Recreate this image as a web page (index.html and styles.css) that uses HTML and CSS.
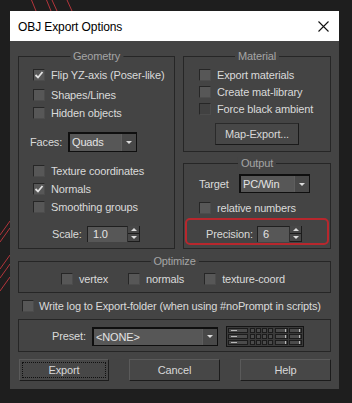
FILE: index.html
```html
<!DOCTYPE html>
<html lang="en">

<head>
    <meta charset="UTF-8">
    <meta name="viewport" content="width=device-width, initial-scale=1.0">
    <title>OBJ Export Options</title>
    <link rel="stylesheet" href="styles.css">
</head>

<body>
    <!-- red strokes of the viewport behind the dialog -->
    <svg class="backdrop" width="352" height="403" viewBox="0 0 352 403">
        <g stroke="#b3353b" stroke-width="1">
            <line x1="31.5" y1="0" x2="36" y2="11" />
            <line x1="46.5" y1="0" x2="51" y2="11" />
            <line x1="52" y1="0" x2="57" y2="11" />
            <line x1="67" y1="0" x2="72" y2="11" />
            <line x1="10" y1="221" x2="0" y2="235" />
            <line x1="10" y1="228" x2="0" y2="242" />
            <line x1="10" y1="255" x2="0" y2="269" />
            <line x1="10" y1="264" x2="0" y2="278" />
            <line x1="10" y1="277" x2="0" y2="291" />
        </g>
    </svg>

    <div class="dialog">
        <div class="titlebar">
            <span class="title">OBJ Export Options</span>
            <svg class="close" width="11" height="11" viewBox="0 0 11 11">
                <path d="M0.5 0.5 L10.5 10.5 M10.5 0.5 L0.5 10.5" stroke="#111" stroke-width="1.1" fill="none" />
            </svg>
        </div>

        <div class="dialog-body">
            <div class="top-row">
                <!-- Geometry -->
                <div class="group geometry">
                    <div class="group-title">Geometry</div>
                    <div class="check-row first">
                        <span class="checkbox"><svg width="10" height="10" viewBox="0 0 10 10"><path d="M1.5 5 L4 7.5 L8.5 2" stroke="#e2e2e2" stroke-width="1.8" fill="none" /></svg></span>
                        Flip YZ-axis (Poser-like)
                    </div>
                    <div class="check-row gap-2"><span class="checkbox"></span>Shapes/Lines</div>
                    <div class="check-row"><span class="checkbox"></span>Hidden objects</div>

                    <div class="field-row faces">
                        <span class="label faces-label">Faces:</span>
                        <div class="select faces-select">
                            <span class="select-value">Quads</span>
                            <span class="select-arrow"><i class="tri-down"></i></span>
                        </div>
                    </div>

                    <div class="check-row gap-10"><span class="checkbox"></span>Texture coordinates</div>
                    <div class="check-row">
                        <span class="checkbox"><svg width="10" height="10" viewBox="0 0 10 10"><path d="M1.5 5 L4 7.5 L8.5 2" stroke="#e2e2e2" stroke-width="1.8" fill="none" /></svg></span>
                        Normals
                    </div>
                    <div class="check-row"><span class="checkbox"></span>Smoothing groups</div>

                    <div class="field-row scale">
                        <span class="label scale-label">Scale:</span>
                        <div class="spinner">
                            <span class="spin-field scale-field">1.0</span>
                            <span class="spin-btns">
                                <span class="spin-btn"><i class="tri-up"></i></span>
                                <span class="spin-btn"><i class="tri-down"></i></span>
                            </span>
                        </div>
                    </div>
                </div>

                <div class="right-col">
                    <!-- Material -->
                    <div class="group material">
                        <div class="group-title">Material</div>
                        <div class="check-row row-17"><span class="checkbox"></span>Export materials</div>
                        <div class="check-row row-17"><span class="checkbox"></span>Create mat-library</div>
                        <div class="check-row row-17"><span class="checkbox dim"></span>Force black ambient</div>
                        <div class="center">
                            <button class="btn map-btn">Map-Export...</button>
                        </div>
                    </div>

                    <!-- Output -->
                    <div class="group output">
                        <div class="group-title">Output</div>
                        <div class="field-row target">
                            <span class="label target-label">Target</span>
                            <div class="select target-select">
                                <span class="select-value">PC/Win</span>
                                <span class="select-arrow"><i class="tri-down"></i></span>
                            </div>
                        </div>
                        <div class="check-row relative"><span class="checkbox"></span>relative numbers</div>
                        <div class="highlight">
                            <span class="label precision-label">Precision:</span>
                            <div class="spinner">
                                <span class="spin-field precision-field">6</span>
                                <span class="spin-btns">
                                    <span class="spin-btn"><i class="tri-up"></i></span>
                                    <span class="spin-btn"><i class="tri-down"></i></span>
                                </span>
                            </div>
                        </div>
                    </div>
                </div>
            </div>

            <!-- Optimize -->
            <div class="group optimize">
                <div class="group-title">Optimize</div>
                <div class="optimize-row">
                    <span class="opt-item"><span class="checkbox"></span>vertex</span>
                    <span class="opt-item"><span class="checkbox"></span>normals</span>
                    <span class="opt-item"><span class="checkbox"></span>texture-coord</span>
                </div>
            </div>

            <div class="check-row log-row"><span class="checkbox"></span>Write log to Export-folder (when using #noPrompt in scripts)</div>

            <!-- Preset -->
            <div class="group preset">
                <div class="preset-row">
                    <span class="label preset-label">Preset:</span>
                    <div class="select preset-select">
                        <span class="select-value">&lt;NONE&gt;</span>
                        <span class="select-arrow"><i class="tri-down"></i></span>
                    </div>
                    <svg class="preset-icon" width="78" height="21" viewBox="0 0 78 21">
                        <rect x="0.5" y="0.5" width="77" height="20" fill="#3a3a3a" stroke="#141414" />
                        <g fill="#4b4b4b" stroke="#1c1c1c">
                            <rect x="2.5" y="2.5" width="19" height="4" />
                            <rect x="2.5" y="8.5" width="19" height="4" />
                            <rect x="2.5" y="14.5" width="19" height="4" />

                            <rect x="24.5" y="2.5" width="4" height="4" />
                            <rect x="30.5" y="2.5" width="4" height="4" />
                            <rect x="36.5" y="2.5" width="4" height="4" />
                            <rect x="42.5" y="2.5" width="4" height="4" />
                            <rect x="24.5" y="8.5" width="4" height="4" />
                            <rect x="30.5" y="8.5" width="4" height="4" />
                            <rect x="36.5" y="8.5" width="4" height="4" />
                            <rect x="42.5" y="8.5" width="4" height="4" />
                            <rect x="24.5" y="14.5" width="4" height="4" />
                            <rect x="30.5" y="14.5" width="4" height="4" />
                            <rect x="36.5" y="14.5" width="4" height="4" />
                            <rect x="42.5" y="14.5" width="4" height="4" />

                            <rect x="49.5" y="2.5" width="12" height="4" />
                            <rect x="49.5" y="8.5" width="12" height="4" />
                            <rect x="49.5" y="14.5" width="12" height="4" />
                            <rect x="63.5" y="2.5" width="12" height="4" />
                            <rect x="63.5" y="8.5" width="12" height="4" />
                            <rect x="63.5" y="14.5" width="12" height="4" />
                        </g>
                        <g stroke="#b8b8b8">
                            <line x1="5" y1="4.5" x2="11" y2="4.5" />
                            <line x1="5" y1="10.5" x2="11" y2="10.5" />
                            <line x1="5" y1="16.5" x2="11" y2="16.5" />
                        </g>
                        <g fill="#b8b8b8">
                            <rect x="59" y="3" width="1" height="3" />
                            <rect x="59" y="9" width="1" height="3" />
                            <rect x="59" y="15" width="1" height="3" />
                            <rect x="73" y="3" width="1" height="3" />
                            <rect x="73" y="9" width="1" height="3" />
                            <rect x="73" y="15" width="1" height="3" />
                        </g>
                    </svg>
                </div>
            </div>

            <div class="buttons">
                <button class="btn dlg-btn export"><span class="focus">Export</span></button>
                <button class="btn dlg-btn">Cancel</button>
                <button class="btn dlg-btn">Help</button>
            </div>
        </div>
    </div>
</body>

</html>
```

FILE: styles.css
```css
body {
    margin: 0;
    background-color: #1e1e1e;
    font-family: "Liberation Sans", Arial, sans-serif;
    font-size: 11px;
    letter-spacing: -0.15px;
    color: #dadada;
    position: relative;
}

/* red lines of the viewport, under the dialog */
.backdrop {
    position: absolute;
    left: 0;
    top: 0;
    z-index: 0;
}

.dialog {
    position: relative;
    z-index: 1;
    width: 329px;
    margin: 11px 0 0 10px;
    background-color: #444444;
}

.titlebar {
    height: 30px;
    background-color: #ffffff;
    display: flex;
    align-items: center;
    justify-content: space-between;
    padding: 0 10px 0 8px;
}

.title {
    font-size: 12px;
    letter-spacing: -0.1px;
    color: #000000;
    padding-top: 1px;
}

.close {
    display: block;
}

.dialog-body {
    padding: 15px 8px 8px 8px;
}

.top-row {
    display: flex;
    align-items: flex-start;
    gap: 8px;
}

.right-col {
    flex: 1;
    display: flex;
    flex-direction: column;
}

/* group boxes */
.group {
    position: relative;
    border: 1px solid #262626;
}

.group-title {
    position: absolute;
    top: -7px;
    left: 50%;
    transform: translateX(-50%);
    padding: 0 3px;
    line-height: 13px;
    background-color: #444444;
    color: #a4a4a4;
    white-space: nowrap;
}

.geometry {
    width: 157px;
    box-sizing: border-box;
    padding: 9px 0 6px 14px;
}

.material {
    padding: 9px 0 6px 15px;
}

.output {
    margin-top: 11px;
    padding: 10px 0 3px 15px;
}

.optimize {
    margin-top: 12px;
    padding: 8px 0 4px 0;
}

.preset {
    margin-top: 4px;
    padding: 5px 0 4px 33px;
}

/* checkboxes */
.check-row {
    display: flex;
    align-items: center;
    height: 18px;
    white-space: nowrap;
}

.row-17 {
    height: 17px;
}

.gap-2 {
    margin-top: 2px;
}

.gap-10 {
    margin-top: 10px;
}

.checkbox {
    width: 12px;
    height: 12px;
    box-sizing: border-box;
    flex: none;
    margin-right: 6px;
    background-color: #575757;
    border-top: 1px solid #262626;
    border-left: 1px solid #262626;
    border-right: 1px solid #4c4c4c;
    border-bottom: 1px solid #4c4c4c;
    display: flex;
    align-items: center;
    justify-content: center;
}

.checkbox svg {
    display: block;
}

.checkbox.dim {
    background-color: #414141;
}

/* rows with a label and a control */
.field-row {
    display: flex;
    align-items: center;
}

.label {
    flex: none;
    white-space: nowrap;
}

.faces {
    margin-top: 10px;
    margin-left: -3px;
}

.faces-label {
    width: 38px;
}

.scale {
    margin-top: 10px;
    margin-left: 19px;
}

.scale-label {
    width: 35px;
}

.target-label {
    width: 40px;
}

.relative {
    margin-top: 6px;
}

.precision-label {
    width: 51px;
}

.preset-label {
    width: 40px;
}

/* drop-down lists */
.select {
    display: flex;
    box-sizing: border-box;
    height: 19px;
    border: 1px solid #0f0f0f;
    border-top-width: 2px;
    border-left-width: 2px;
    background-color: #575757;
}

.faces-select {
    width: 69px;
    height: 20px;
}

.target-select {
    width: 71px;
}

.preset-select {
    width: 126px;
    margin-right: 8px;
}

.select-value {
    flex: 1;
    padding-left: 2px;
    line-height: 16px;
    color: #e4e4e4;
}

.faces-select .select-value {
    line-height: 17px;
}

.select-arrow {
    width: 14px;
    background-color: #484848;
    border-left: 1px solid #5e5e5e;
    display: flex;
    align-items: center;
    justify-content: center;
}

.tri-down {
    width: 0;
    height: 0;
    border-left: 3px solid transparent;
    border-right: 3px solid transparent;
    border-top: 3px solid #dcdcdc;
}

.tri-up {
    width: 0;
    height: 0;
    border-left: 3px solid transparent;
    border-right: 3px solid transparent;
    border-bottom: 3px solid #dcdcdc;
}

/* spinners */
.spinner {
    display: flex;
    height: 16px;
}

.spin-field {
    box-sizing: border-box;
    padding-left: 5px;
    line-height: 14px;
    background-color: #575757;
    border-top: 1px solid #1f1f1f;
    border-left: 1px solid #1f1f1f;
    border-right: 1px solid #2e2e2e;
    color: #e4e4e4;
}

.scale-field {
    width: 41px;
}

.precision-field {
    width: 33px;
}

.spin-btns {
    width: 12px;
    display: flex;
    flex-direction: column;
}

.spin-btn {
    flex: 1;
    box-sizing: border-box;
    background-color: #474747;
    border-right: 1px solid #1c1c1c;
    border-bottom: 1px solid #1c1c1c;
    display: flex;
    align-items: center;
    justify-content: center;
}

/* red mark round the precision field */
.highlight {
    display: flex;
    align-items: center;
    box-sizing: border-box;
    width: 144px;
    height: 27px;
    margin: 1px 0 0 -14px;
    padding: 4px 0 0 19px;
    border: 2px solid #b8272d;
    border-radius: 5px;
}

/* optimize */
.optimize-row {
    display: flex;
    justify-content: center;
    gap: 20px;
    height: 18px;
    padding-right: 3px;
}

.opt-item {
    display: flex;
    align-items: center;
}

.log-row {
    margin: 4px 0 0 4px;
}

.log-row .checkbox {
    margin-right: 5px;
}

.preset-row {
    display: flex;
    align-items: center;
    height: 22px;
}

.preset-icon {
    display: block;
}

/* buttons */
.btn {
    font-family: inherit;
    font-size: 11px;
    letter-spacing: -0.15px;
    color: #d8d8d8;
    background-color: #474747;
    border: 1px solid #1c1c1c;
    border-top-color: #5a5a5a;
    border-left-color: #5a5a5a;
    padding: 0;
    cursor: pointer;
}

.center {
    display: flex;
    justify-content: center;
    margin: 6px 15px 0 0;
}

.map-btn {
    width: 84px;
    height: 22px;
    border-color: #2a2a2a;
    border-right-color: #1a1a1a;
    border-bottom-color: #1a1a1a;
}

.buttons {
    display: flex;
    justify-content: space-between;
    margin-top: 7px;
    padding-left: 1px;
}

.dlg-btn {
    width: 91px;
    height: 22px;
}

.export {
    width: 90px;
    padding: 2px;
}

.focus {
    display: flex;
    align-items: center;
    justify-content: center;
    height: 100%;
    box-sizing: border-box;
    border: 1px dotted #101010;
}
```
